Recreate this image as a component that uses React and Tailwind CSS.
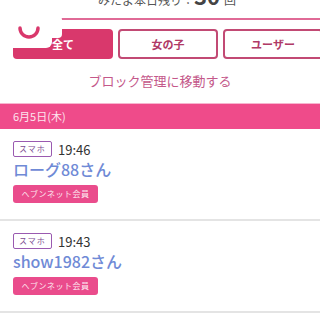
import React from "react";

const font = { fontFamily: '"Noto Sans CJK JP", "Noto Sans", sans-serif' };

function Item({ time, name }) {
  return (
    <div className="px-[13px] pt-[12px] pb-[16px] border-b-2 border-[#e4e4e4]">
      <div className="flex items-center gap-[6px] h-[16px]">
        <span className="h-[16px] w-[39px] border border-[#9a5ab0] rounded-[2px] text-[8px] tracking-[1px] text-[#7a4a90] flex items-center justify-center">スマホ</span>
        <span className="text-[13px] text-[#333] leading-none">{time}</span>
      </div>
      <div className="mt-[2px] text-[16px] leading-[20px] text-[#6f8ad6] font-medium">{name}</div>
      <div className="mt-[6px] w-[85px] h-[18px] rounded-[3px] bg-[#ea4c8c] text-[#fde8f0] text-[8px] tracking-[0.5px] flex items-center justify-center">ヘブンネット会員</div>
    </div>
  );
}

export default function App() {
  return (
    <div className="w-[320px] h-[320px] overflow-hidden bg-white relative" style={font}>
      <div className="h-[18px] overflow-hidden relative">
        <div className="absolute left-0 right-0 top-[-20px] flex items-baseline justify-center pl-[14px] text-[#555]">
          <span className="text-[12px]">みたよ本日残り：</span>
          <span className="text-[22px] font-bold text-[#444] leading-[30px]">30</span>
          <span className="text-[12px] ml-[4px]">回</span>
        </div>
      </div>
      <div className="h-[2px] bg-[#e06a96]" />
      <div className="flex gap-[5px] pl-[13px] mt-[9px]">
        <div className="shrink-0 w-[100px] h-[30px] rounded-[4px] bg-[#d9386c] text-white text-[11px] font-bold flex items-center justify-center">全て</div>
        <div className="shrink-0 w-[100px] h-[30px] rounded-[4px] border-2 border-[#c24a74] text-[#b03a66] text-[11px] font-bold flex items-center justify-center">女の子</div>
        <div className="shrink-0 w-[100px] h-[30px] rounded-[4px] border-2 border-[#c24a74] text-[#b03a66] text-[11px] font-bold flex items-center justify-center">ユーザー</div>
      </div>
      <div className="mt-[13px] text-center text-[13px] text-[#c4588a] leading-[18px]">ブロック管理に移動する</div>
      <div className="mt-[13px] border-t border-[#f7b5cf] h-[26px] bg-[#ef4b8a] flex items-center px-[13px] text-[11px] text-[#fde4ee]">6月5日(木)</div>
      <Item time="19:46" name="ローグ88さん" />
      <Item time="19:43" name="show1982さん" />
      <div className="absolute left-0 top-[16px] w-[52px] h-[32px] bg-white rounded-br-[6px]" />
      <div className="absolute left-[52px] top-[16px] w-[10px] h-[22px] bg-white rounded-r-[4px]" />
      <svg className="absolute left-[16px] top-[16px]" width="26" height="26" viewBox="0 0 26 26">
        <path d="M4 12 A9 9 0 0 0 22 12" fill="none" stroke="#d9386c" strokeWidth="3.5" strokeLinecap="round" />
      </svg>
    </div>
  );
}
